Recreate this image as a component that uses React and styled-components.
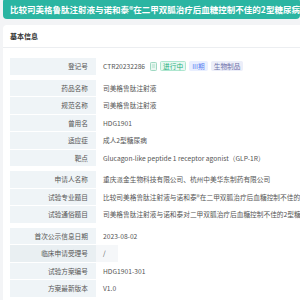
import React from "react";
import styled, { createGlobalStyle } from "styled-components";

const GlobalStyle = createGlobalStyle`
  body {
    margin: 0;
    background: #f3f4f6;
    font-family: "Noto Sans CJK SC", "Noto Sans", sans-serif;
  }
`;

const groups = [
  [{ label: "登记号", value: "CTR20232286", tags: true }],
  [
    { label: "药品名称", value: "司美格鲁肽注射液" },
    { label: "规范名称", value: "司美格鲁肽注射液" },
    { label: "曾用名", value: "HDG1901" },
    { label: "适应症", value: "成人2型糖尿病" },
    { label: "靶点", value: "Glucagon-like peptide 1 receptor agonist（GLP-1R）" },
  ],
  [
    { label: "申请人名称", value: "重庆派金生物科技有限公司、杭州中美华东制药有限公司" },
    {
      label: "试验专业题目",
      value: "比较司美格鲁肽注射液与诺和泰®在二甲双胍治疗后血糖控制不佳的2型糖尿病患者中的有效性和安全性",
    },
    {
      label: "试验通俗题目",
      value: "司美格鲁肽注射液与诺和泰对二甲双胍治疗后血糖控制不佳的2型糖尿病患者的疗效研究",
    },
  ],
  [
    { label: "首次公示信息日期", value: "2023-08-02" },
    { label: "临床申请受理号", value: "/", active: true },
    { label: "试验方案编号", value: "HDG1901-301" },
    { label: "方案最新版本", value: "V1.0" },
  ],
];

const tags = [
  { text: "进行中", kind: "green" },
  { text: "III期", kind: "blue" },
  { text: "生物制品", kind: "purple" },
];

const tagColors = {
  green: { bg: "#e7f8f1", border: "#aee6cf", color: "#22b07d" },
  blue: { bg: "#e9efff", border: "#e9efff", color: "#5b7ff0" },
  purple: { bg: "#eceef9", border: "#eceef9", color: "#6c70a8" },
};

const CopyIcon = () => (
  <svg width="7" height="9" viewBox="0 0 7 9">
    <rect x="0.5" y="0.5" width="6" height="8" rx="0.8" fill="#eaf7f1" stroke="#9fd8c2" />
    <line x1="2" y1="3" x2="5" y2="3" stroke="#9fd8c2" strokeWidth="0.8" />
    <line x1="2" y1="5" x2="5" y2="5" stroke="#9fd8c2" strokeWidth="0.8" />
  </svg>
);

const App = () => {
  return (
    <>
      <GlobalStyle />
      <Page>
        <TitleBar>
          比较司美格鲁肽注射液与诺和泰®在二甲双胍治疗后血糖控制不佳的2型糖尿病患者中的有效性和安全性
        </TitleBar>
        <Card>
          <CardHeader>基本信息</CardHeader>
          <CardBody>
            {groups.map((group, gi) => (
              <Group key={gi}>
                {group.map((row) => (
                  <Row key={row.label}>
                    <Label $active={row.active}>{row.label}</Label>
                    <Value>
                      <ValueText $active={row.active}>{row.value}</ValueText>
                      {row.tags && (
                        <>
                          <IconBox>
                            <CopyIcon />
                          </IconBox>
                          {tags.map((t) => (
                            <Tag key={t.text} $kind={t.kind}>
                              {t.text}
                            </Tag>
                          ))}
                        </>
                      )}
                    </Value>
                  </Row>
                ))}
              </Group>
            ))}
          </CardBody>
        </Card>
      </Page>
    </>
  );
};

export default App;

const Page = styled.div`
  width: 300px;
  height: 300px;
  overflow: hidden;
  padding-left: 3px;
  box-sizing: border-box;
`;

const TitleBar = styled.div`
  margin-top: -2px;
  height: 21px;
  line-height: 23px;
  background: #2bb5a2;
  border-radius: 4px;
  color: #fff;
  font-weight: 700;
  font-size: 8.5px;
  padding-left: 7px;
  white-space: nowrap;
  overflow: hidden;
`;

const Card = styled.div`
  margin-top: 6px;
  background: #fff;
  border-radius: 4px 0 0 0;
  height: 300px;
`;

const CardHeader = styled.div`
  height: 22px;
  line-height: 22px;
  padding-left: 7px;
  font-size: 7px;
  font-weight: 700;
  color: #333;
  border-bottom: 1px solid #eceef1;
`;

const CardBody = styled.div`
  padding: 10px 0 0 7px;
  display: flex;
  flex-direction: column;
  gap: 5px;
`;

const Group = styled.div`
  display: flex;
  flex-direction: column;
  gap: 1px;
`;

const Row = styled.div`
  display: flex;
  height: 16.5px;
  font-size: 6.7px;
  color: #555;
`;

const Label = styled.div`
  width: 86px;
  flex-shrink: 0;
  box-sizing: border-box;
  padding-right: 8px;
  text-align: right;
  line-height: 16.5px;
  background: ${(p) => (p.$active ? "#e9eff2" : "#eff4f7")};
  white-space: nowrap;
`;

const Value = styled.div`
  flex: 1;
  min-width: 0;
  display: flex;
  align-items: center;
  padding-left: 7px;
  white-space: nowrap;
  overflow: hidden;
`;

const ValueText = styled.span`
  line-height: 16.5px;
  padding-right: ${(p) => (p.$active ? "12px" : "0")};
  margin-left: ${(p) => (p.$active ? "-7px" : "0")};
  padding-left: ${(p) => (p.$active ? "7px" : "0")};
  background: ${(p) => (p.$active ? "#f5f7f9" : "transparent")};
`;

const IconBox = styled.span`
  display: inline-flex;
  margin: 0 3px 0 5px;
`;

const Tag = styled.span`
  display: inline-block;
  height: 10px;
  line-height: 9px;
  padding: 0 2px;
  margin-right: 3px;
  border-radius: 1.5px;
  box-sizing: border-box;
  font-size: 6.7px;
  background: ${(p) => tagColors[p.$kind].bg};
  color: ${(p) => tagColors[p.$kind].color};
  border: 0.6px solid ${(p) => tagColors[p.$kind].border};
`;
